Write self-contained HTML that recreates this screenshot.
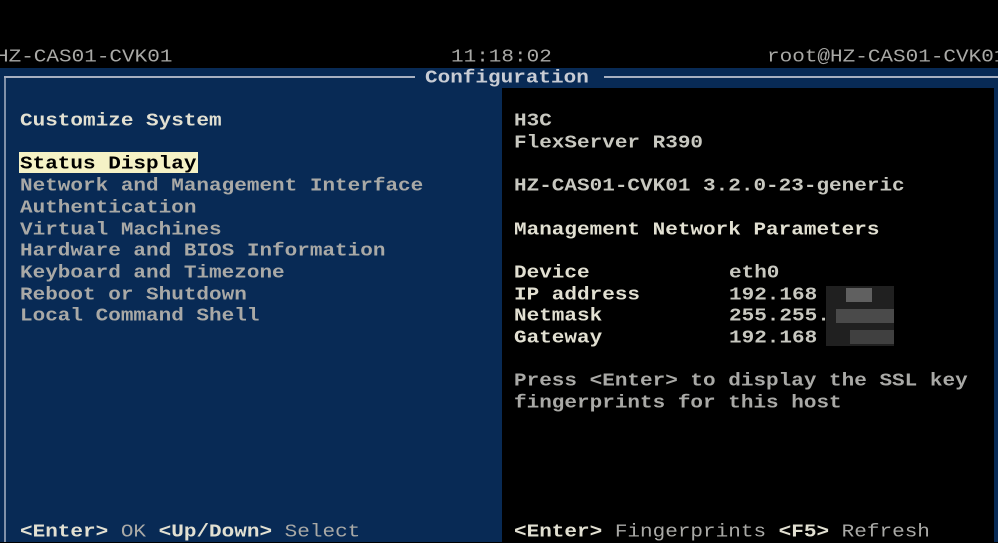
<!DOCTYPE html>
<html><head><meta charset="utf-8"><style>
*{margin:0;padding:0}
body{width:998px;height:542px;background:#000;position:relative;overflow:hidden;font-family:"Liberation Mono",monospace;font-size:21px;font-weight:bold;}
.t{position:absolute;white-space:pre;line-height:22px;height:22px;transform:scaleY(0.9);margin-top:3px}
.w{color:#e2e0d2}
.g{color:#a9a9a6}
.blue{position:absolute;background:#082a55}
</style></head><body>
<div class="blue" style="left:0;top:68px;width:998px;height:474px"></div>
<div style="position:absolute;left:502px;top:88px;width:492px;height:454px;background:#000"></div>
<div style="position:absolute;left:4px;top:76px;width:2px;height:466px;background:#8090a8"></div>
<div style="position:absolute;left:4px;top:76px;width:411px;height:2px;background:#a8b0c0"></div>
<div style="position:absolute;left:604px;top:76px;width:394px;height:2px;background:#a8b0c0"></div>

<div class="t g" style="left:-4px;top:44px;font-weight:normal">HZ-CAS01-CVK01</div>
<div class="t g" style="left:451px;top:44px;font-weight:normal">11:18:02</div>
<div class="t g" style="left:767px;top:44px;font-weight:normal">root@HZ-CAS01-CVK01</div>
<div class="t w" style="left:425px;top:65px;color:#c8ccd4">Configuration</div>

<div class="t w" style="left:20px;top:108px">Customize System</div>
<div style="position:absolute;left:19px;top:152px;width:179px;height:21px;background:#f5f2c6"></div>
<div class="t" style="left:20px;top:151px;color:#000">Status Display</div>
<div class="t g" style="left:20px;top:173px">Network and Management Interface</div>
<div class="t g" style="left:20px;top:195px">Authentication</div>
<div class="t g" style="left:20px;top:217px">Virtual Machines</div>
<div class="t g" style="left:20px;top:238px">Hardware and BIOS Information</div>
<div class="t g" style="left:20px;top:260px">Keyboard and Timezone</div>
<div class="t g" style="left:20px;top:282px">Reboot or Shutdown</div>
<div class="t g" style="left:20px;top:303px">Local Command Shell</div>

<div class="t g" style="left:514px;top:108px;color:#c8c8c0">H3C</div>
<div class="t g" style="left:514px;top:130px;color:#c8c8c0">FlexServer R390</div>
<div class="t g" style="left:514px;top:173px;color:#c8c8c0">HZ-CAS01-CVK01 3.2.0-23-generic</div>
<div class="t w" style="left:514px;top:217px">Management Network Parameters</div>
<div class="t w" style="left:514px;top:260px">Device</div>
<div class="t w" style="left:514px;top:282px">IP address</div>
<div class="t w" style="left:514px;top:303px">Netmask</div>
<div class="t w" style="left:514px;top:325px">Gateway</div>
<div class="t g" style="left:729px;top:260px;color:#c8c8c0">eth0</div>
<div class="t g" style="left:729px;top:282px;color:#c8c8c0">192.168</div>
<div class="t g" style="left:729px;top:303px;color:#c8c8c0">255.255.</div>
<div class="t g" style="left:729px;top:325px;color:#c8c8c0">192.168</div>
<div style="position:absolute;left:826px;top:286px;width:68px;height:60px;background:#202020"></div>
<div style="position:absolute;left:846px;top:288px;width:26px;height:14px;background:#606060"></div>
<div style="position:absolute;left:836px;top:309px;width:58px;height:14px;background:#4a4a4a"></div>
<div style="position:absolute;left:850px;top:330px;width:44px;height:14px;background:#404040"></div>
<div class="t g" style="left:514px;top:368px">Press &lt;Enter&gt; to display the SSL key</div>
<div class="t g" style="left:514px;top:390px">fingerprints for this host</div>

<div class="t" style="left:20px;top:519px"><span class="w">&lt;Enter&gt;</span><span class="g" style="font-weight:normal"> OK </span><span class="w">&lt;Up/Down&gt;</span><span class="g" style="font-weight:normal"> Select</span></div>
<div class="t" style="left:514px;top:519px"><span class="w">&lt;Enter&gt;</span><span class="g" style="font-weight:normal"> Fingerprints </span><span class="w">&lt;F5&gt;</span><span class="g" style="font-weight:normal"> Refresh</span></div>
</body></html>
